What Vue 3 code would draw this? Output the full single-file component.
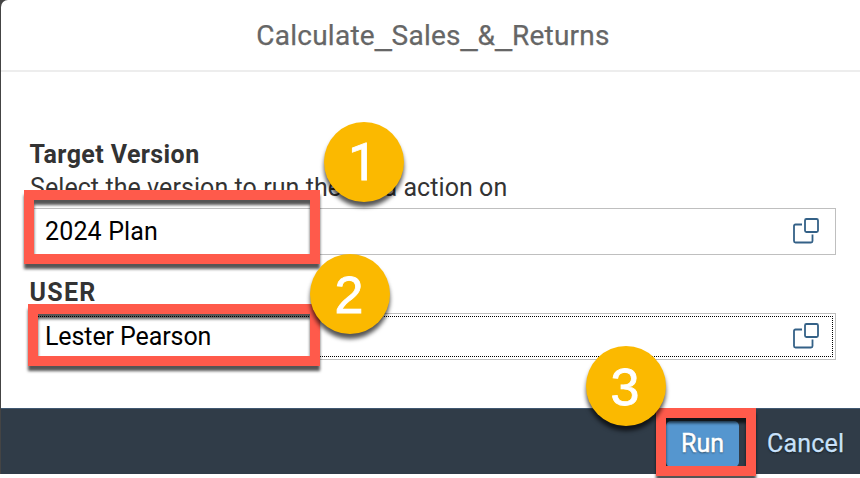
<script setup>
const titleParts = ['Calculate', '_', 'Sales', '_', '&', '_', 'Returns']
const fields = [
  {
    id: 'version',
    label: 'Target Version',
    hint: 'Select the version to run the data action on',
    value: '2024 Plan',
    focused: false,
  },
  { id: 'user', label: 'USER', hint: '', value: 'Lester Pearson', focused: true },
]
const steps = [1, 2, 3]
</script>

<template>
  <div class="screen">
    <section class="dialog">
      <header class="header">
        <h1 class="title"><span v-for="(p, i) in titleParts" :key="i" :class="{ underscore: p === '_' }">{{ p }}</span></h1>
      </header>

      <main class="body">
        <div v-for="f in fields" :key="f.id" class="field" :class="f.id">
          <div class="label">{{ f.label }}</div>
          <div v-if="f.hint" class="hint">{{ f.hint }}</div>
          <div class="input">
            <div class="inner" :class="{ focused: f.focused }">
              <span class="value">{{ f.value }}</span>
              <svg class="icon" width="28" height="28" viewBox="0 0 28 28">
                <path d="M10 6.5H3.5Q2 6.5 2 8V23Q2 24.5 3.5 24.5H19Q20.5 24.5 20.5 23V16.5" />
                <rect x="13" y="1" width="13" height="13" rx="1.4" />
              </svg>
            </div>
          </div>
        </div>
      </main>

      <footer class="footer">
        <button class="run">Run</button>
        <button class="cancel">Cancel</button>
      </footer>
    </section>

    <div v-for="n in steps" :key="'f' + n" class="frame" :class="'frame-' + n"></div>
    <div v-for="n in steps" :key="'b' + n" class="badge" :class="'badge-' + n">{{ n }}</div>
  </div>
</template>

<style>
body {
  background: #fff;
  overflow: hidden;
}
</style>

<style scoped>
.screen {
  position: relative;
  width: 860px;
  height: 478px;
  overflow: hidden;
  background: #fff;
  font-family: Roboto, "Noto Sans", sans-serif;
}
.dialog {
  box-sizing: border-box;
  display: flex;
  flex-direction: column;
  height: 474px;
  padding-left: 1px;
  background: linear-gradient(#444 0 0) left / 12px 100% no-repeat;
}
.header {
  box-sizing: border-box;
  display: flex;
  align-items: center;
  justify-content: center;
  height: 72px;
  padding: 2px 0 0 5px;
  border-bottom: 2px solid #ededed;
  border-top-left-radius: 7px;
  background: #fff;
}
.title {
  margin: 0;
  color: #666;
  font-size: 28px;
  font-weight: 400;
  line-height: 34px;
  letter-spacing: 0.25px;
  -webkit-text-stroke: 0.25px #666;
}
.underscore {
  font-family: "Liberation Sans", Arial, sans-serif;
  font-size: 30px;
  line-height: 1;
  letter-spacing: 0;
}
.body {
  box-sizing: border-box;
  flex: 1;
  display: flex;
  flex-direction: column;
  padding: 66px 24px 0 28px;
  background: #fff;
}
.label {
  padding-left: 0.5px;
  color: #333;
  font-size: 25px;
  font-weight: 700;
  line-height: 33px;
  letter-spacing: 0.4px;
}
.hint {
  padding-left: 1px;
  color: #333;
  font-size: 25px;
  line-height: 33px;
  letter-spacing: 0.07px;
  margin-bottom: 4px;
  white-space: nowrap;
}
.user {
  margin-top: 21px;
}
.user .label {
  height: 37px;
  letter-spacing: 1.3px;
}
.input {
  box-sizing: border-box;
  height: 47px;
  padding: 2px;
  border: 1px solid #bfbfbf;
  background: #fff;
}
.inner {
  box-sizing: border-box;
  display: flex;
  align-items: center;
  justify-content: space-between;
  height: 41px;
  padding: 0 12px 0 12px;
  border: 1px solid transparent;
}
.inner.focused {
  border: 1px dotted #000;
}
.value {
  color: #000;
  font-size: 25px;
  line-height: 39px;
}
.version .value {
  letter-spacing: 0.15px;
}
.user .value {
  letter-spacing: -0.1px;
}
.icon {
  fill: none;
  stroke: #346187;
  stroke-width: 1.8;
}
.footer {
  box-sizing: border-box;
  display: flex;
  align-items: flex-start;
  justify-content: flex-end;
  gap: 12px;
  height: 66px;
  padding: 12px 0 0;
  border-top: 1px solid #3f5871;
  background: #303c48;
}
button {
  box-sizing: border-box;
  height: 46px;
  margin: 0;
  border: 0;
  font: 400 25px/46px Roboto, sans-serif;
  -webkit-text-stroke: 0.25px currentColor;
  text-shadow: 0 1px 2px #0009;
}
.run {
  width: 73px;
  padding: 0;
  border-radius: 5px;
  background: #5596cf;
  color: #fff;
  -webkit-text-stroke-width: 0.5px;
}
.cancel {
  width: 109px;
  padding: 0 0 0 16px;
  background: transparent;
  color: #c8e1fa;
  letter-spacing: 0.2px;
  text-align: left;
}

/* Callout frames and step markers float above the dialog */
.frame {
  position: absolute;
  box-sizing: border-box;
  border: 10px solid #ff5a4b;
  filter: drop-shadow(0 5px 1.6px #000a);
}
.frame-1 { left: 24px; top: 190px; width: 296px; height: 74px; }
.frame-2 { left: 28px; top: 304px; width: 292px; height: 62px; }
.frame-3 { left: 656px; top: 408px; width: 100px; height: 68px; }
.badge {
  position: absolute;
  box-sizing: border-box;
  width: 80px;
  height: 80px;
  padding-right: 2px;
  border-radius: 50%;
  background: #fbb900;
  box-shadow: 0 5px 4px #000a;
  color: #fff;
  font: 400 52px/82px "Liberation Sans", Arial, sans-serif;
  -webkit-text-stroke: 0.8px #fff;
  text-align: center;
}
.badge-1 {
  left: 324px;
  top: 122px;
  padding-right: 3px;
  font-family: Roboto, sans-serif;
}
.badge-2 { left: 310px; top: 254px; }
.badge-3 { left: 586px; top: 346px; }
</style>
